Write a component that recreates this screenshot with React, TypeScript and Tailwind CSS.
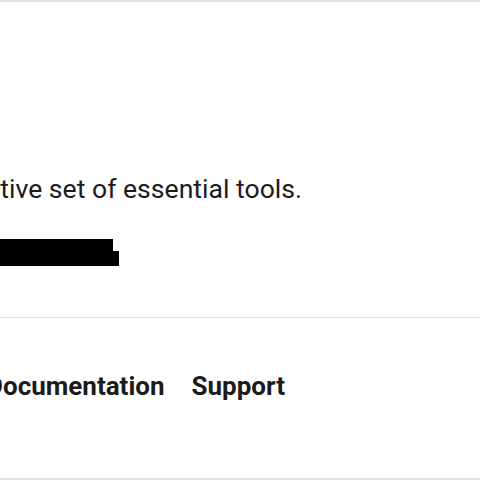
export default function App() {
  return (
    <div className="h-[480px] w-[480px] overflow-hidden bg-white text-[#1b1b1b]" style={{ fontFamily: 'Roboto, "Liberation Sans", sans-serif' }}>
      <div className="border-t-2 border-[#e3e3e3]">
        <section className="h-[316px] border-b border-[#dedede] pt-[169px]">
          <div className="flex w-[302px] justify-end">
            <p className="whitespace-nowrap text-[26.6px] leading-[36px]">
              Build faster with an intuitive set of essential tools.
            </p>
          </div>
          <div className="mt-8 flex items-end">
            <div className="h-[27px] w-[113px] bg-black" />
            <div className="h-[15px] w-[6px] bg-black" />
          </div>
        </section>
        <nav className="h-[162px] border-b-2 border-[#e3e3e3] pt-[50px]">
          <div className="flex w-[285px] justify-end gap-[27px] whitespace-nowrap text-[26px] font-bold leading-[36px]">
            <a>Features</a>
            <a>Documentation</a>
            <a>Support</a>
          </div>
        </nav>
      </div>
    </div>
  )
}
